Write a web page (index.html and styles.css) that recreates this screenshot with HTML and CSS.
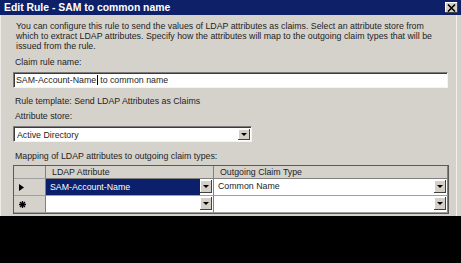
FILE: index.html
```html
<!DOCTYPE html>
<html>
<head>
<meta charset="utf-8">
<link rel="stylesheet" href="styles.css">
</head>
<body>
<div class="dialog">
  <div class="titlebar">
    <span class="title">Edit Rule - SAM to common name</span>
    <span class="close"><svg width="9" height="8" viewBox="0 0 9 8"><path d="M1 0.5 L8 7.5 M8 0.5 L1 7.5" stroke="#000" stroke-width="1.6"/></svg></span>
  </div>
  <div class="content">
    <p class="desc">You can configure this rule to send the values of LDAP attributes as claims. Select an attribute store from<br>which to extract LDAP attributes. Specify how the attributes will map to the outgoing claim types that will be<br>issued from the rule.</p>
    <div class="label l1">Claim rule name:</div>
    <div class="textbox">SAM-Account-Name<span class="caret"></span>to common name</div>
    <div class="label l2">Rule template: Send LDAP Attributes as Claims</div>
    <div class="label l3">Attribute store:</div>
    <div class="select"><span class="val">Active Directory</span><span class="ddbtn"><i></i></span></div>
    <div class="label l4">Mapping of LDAP attributes to outgoing claim types:</div>
    <div class="grid">
      <div class="hc rh"></div>
      <div class="hc">LDAP Attribute</div>
      <div class="hc last">Outgoing Claim Type</div>

      <div class="rh r1"><svg width="5" height="7" viewBox="0 0 5 7"><path d="M0 0 L5 3.5 L0 7 Z" fill="#000"/></svg></div>
      <div class="cell sel r1"><span class="val">SAM-Account-Name</span><span class="ddbtn"><i></i></span></div>
      <div class="cell r1 last"><span class="val">Common Name</span><span class="ddbtn"><i></i></span></div>

      <div class="rh r2"><svg width="7" height="7" viewBox="0 0 7 7"><path d="M3.5 0 V7 M0 3.5 H7 M1 1 L6 6 M6 1 L1 6" stroke="#000" stroke-width="1.3"/></svg></div>
      <div class="cell r2"><span class="val"></span><span class="ddbtn"><i></i></span></div>
      <div class="cell r2 last"><span class="val"></span><span class="ddbtn"><i></i></span></div>
    </div>
  </div>
</div>
<div class="black"></div>
</body>
</html>
```

FILE: styles.css
```css
html, body {
  margin: 0;
  padding: 0;
  width: 461px;
  height: 263px;
  overflow: hidden;
  background: #000;
}
body {
  font-family: "Liberation Sans", Arial, sans-serif;
  font-size: 8.8px;
  color: #1e1e1e;
}
.dialog {
  height: 216px;
  background: #d5d2cc;
  border-left: 1px solid #ecebe8;
  border-right: 6px solid #d5d2cc;
  box-sizing: border-box;
  display: flex;
  flex-direction: column;
  position: relative;
}
.dialog::after {
  content: "";
  position: absolute;
  top: 15px;
  bottom: 0;
  right: -2px;
  width: 1px;
  background: #f2f1ee;
}
.titlebar {
  height: 15px;
  background: #0e2067;
  display: flex;
  align-items: center;
  justify-content: space-between;
  padding: 0 3px 0 4px;
  margin-right: -6px;
  margin-left: -1px;
}
.title {
  color: #fff;
  font-weight: bold;
  font-size: 10.4px;
}
.close {
  width: 13px;
  height: 11px;
  background: #d4d0c8;
  box-shadow: inset -1px -1px 0 #404040, inset 1px 1px 0 #fff;
  display: flex;
  align-items: center;
  justify-content: center;
}
.content {
  padding: 0 0 0 12px;
  display: flex;
  flex-direction: column;
}
.desc {
  margin: 6px 0 0 3px;
  width: 440px;
  white-space: nowrap;
  line-height: 10px;
  height: 30px;
}
.label {
  line-height: 10px;
  height: 10px;
  margin-left: 2px;
}
.l1 { margin-top: 6px; }
.l2 { margin-top: 8px; }
.l3 { margin-top: 5px; }
.l4 { margin-top: 9px; }
.textbox {
  margin-top: 5px;
  width: 435px;
  height: 16px;
  box-sizing: border-box;
  background: #fff;
  border-top: 1px solid #7a7a7a;
  border-left: 1px solid #7a7a7a;
  border-right: 1px solid #f4f4f4;
  border-bottom: 1px solid #f4f4f4;
  box-shadow: inset 1px 1px 0 #3c3c3c;
  padding: 0 2px;
  line-height: 14px;
  display: flex;
  align-items: center;
}
.caret {
  display: inline-block;
  width: 1px;
  height: 10px;
  background: #000;
  margin: 0 2px 0 1px;
}
.select {
  margin-top: 5px;
  width: 239px;
  height: 16px;
  box-sizing: border-box;
  background: #fff;
  border-top: 1px solid #7a7a7a;
  border-left: 1px solid #7a7a7a;
  border-right: 1px solid #f4f4f4;
  border-bottom: 1px solid #f4f4f4;
  box-shadow: inset 1px 1px 0 #3c3c3c;
  display: flex;
  align-items: stretch;
  padding: 2px 1px 1px 2px;
}
.val {
  flex: 1;
  line-height: 12px;
  padding-left: 1px;
}
.ddbtn {
  width: 12px;
  background: #d4d0c8;
  box-shadow: inset -1px -1px 0 #404040, inset 1px 1px 0 #fff;
  display: flex;
  align-items: center;
  justify-content: center;
}
.ddbtn i {
  width: 0;
  height: 0;
  border-left: 3px solid transparent;
  border-right: 3px solid transparent;
  border-top: 3px solid #000;
}
.grid {
  margin-top: 4px;
  width: 436px;
  box-sizing: border-box;
  border: 1px solid #5a5a5a;
  display: grid;
  grid-template-columns: 32px 168px 1fr;
  grid-template-rows: 13px 17px 17px;
  background: #d5d2cc;
}
.hc {
  border-right: 1px solid #808080;
  border-bottom: 1px solid #808080;
  line-height: 13px;
  padding-left: 6px;
}
.hc.last, .cell.last { border-right: 1px solid #808080; }
.rh {
  border-right: 1px solid #808080;
  border-bottom: 1px solid #a0a0a0;
  display: flex;
  align-items: center;
  padding-left: 5px;
}
.cell {
  background: #fff;
  border-right: 1px solid #808080;
  border-bottom: 1px solid #a0a0a0;
  display: flex;
  align-items: stretch;
  padding: 1px 1px 2px 1px;
}
.cell .val { padding-left: 3px; line-height: 13px; }
.cell.sel .val {
  background: #0c1f6a;
  color: #fff;
  margin: -1px 0 -2px -1px;
  padding-left: 4px;
  line-height: 16px;
}
.black {
  height: 47px;
  background: #000;
}
```
